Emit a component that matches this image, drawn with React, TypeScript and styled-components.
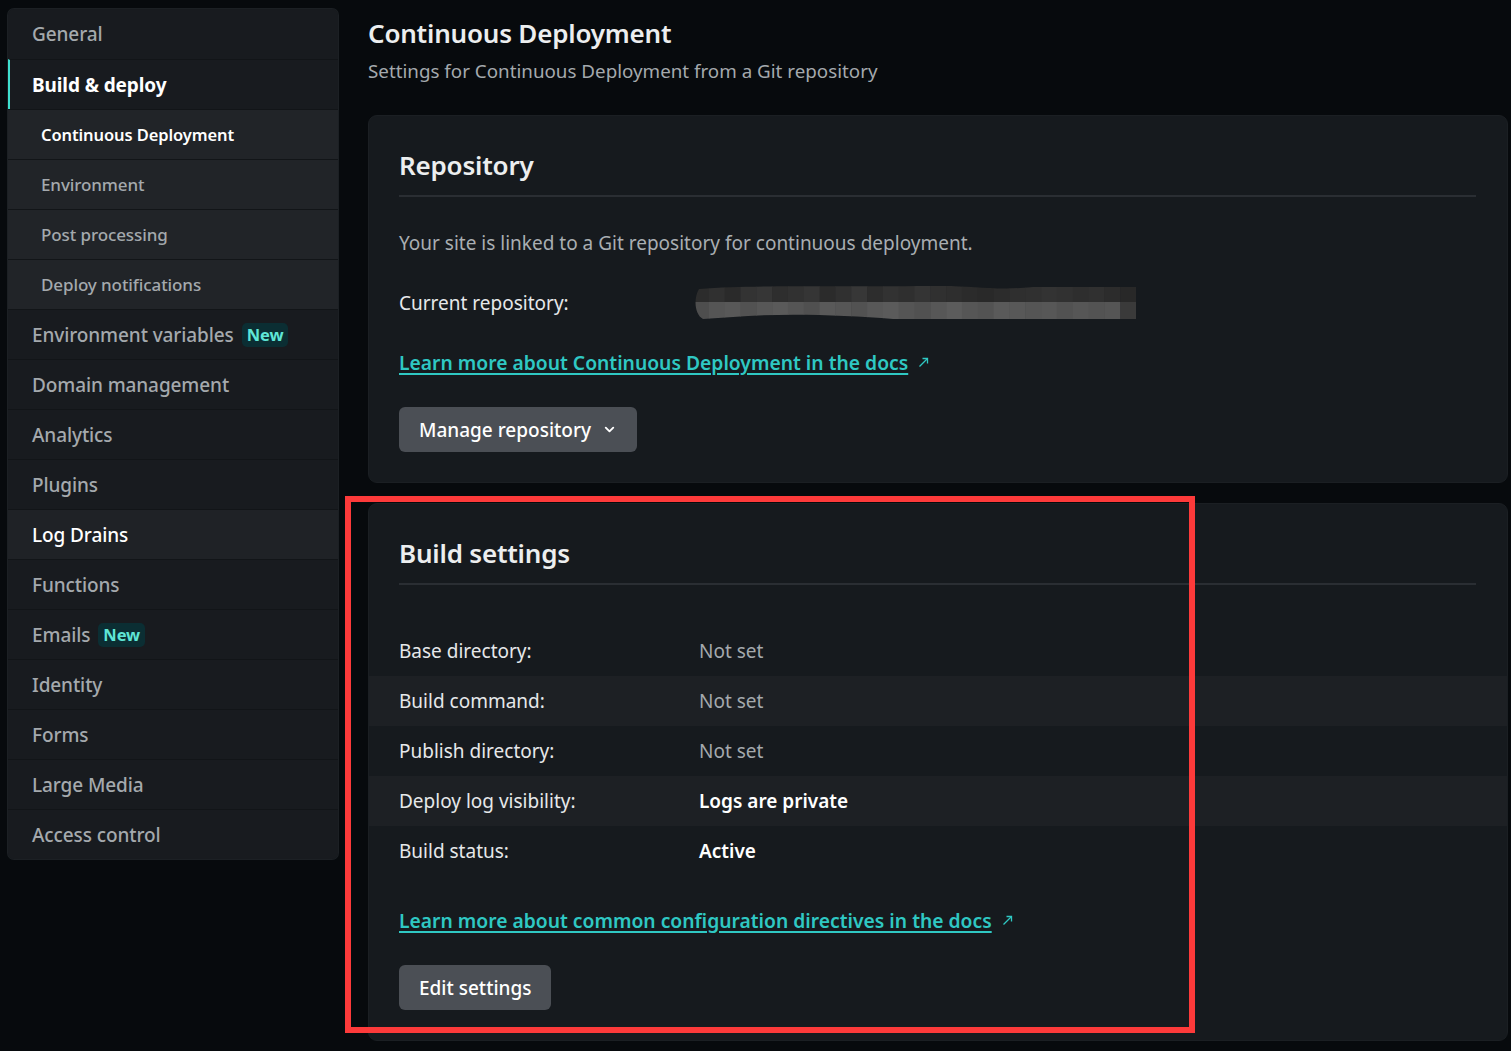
import React from "react";
import styled, { createGlobalStyle } from "styled-components";
import { ChevronDown } from "lucide-react";

const Global = createGlobalStyle`
  html, body { margin: 0; padding: 0; background: #070a0d; }
  body { font-family: "Noto Sans", "Open Sans", sans-serif; color: #e6e8ea; }
  * { box-sizing: border-box; }
`;

const Page = styled.div`
  display: grid;
  grid-template-columns: 330px 1fr;
  column-gap: 30px;
  align-items: start;
  padding: 9px 3px 12px 8px;
  min-height: 1051px;
  position: relative;
`;

const Sidebar = styled.nav`
  background: #181b1f;
  border-radius: 6px;
  overflow: hidden;
  display: flex;
  flex-direction: column;
  box-shadow: 0 0 0 1px #1c2024;
`;

const NavItem = styled.div<{ $active?: boolean; $sub?: boolean; $hover?: boolean }>`
  height: 50px;
  display: flex;
  align-items: center;
  gap: 8px;
  padding-left: ${(p) => (p.$sub ? "33px" : p.$active ? "22px" : "24px")};
  border-left: ${(p) => (p.$active ? "2px solid #3fe0d0" : "none")};
  border-top: 1px solid #121518;
  font-size: ${(p) => (p.$sub ? "17px" : "19px")};
  font-weight: ${(p) => (p.$active ? 700 : 500)};
  color: ${(p) => (p.$active || p.$hover ? "#ffffff" : "#a4a9ad")};
  background: ${(p) => (p.$sub ? "#212428" : p.$hover ? "#1f2226" : "#181b1f")};
  letter-spacing: -0.1px;
  &:first-child { border-top: none; }
`;

const SubActive = styled(NavItem)`
  color: #ffffff;
  font-weight: 600;
  font-size: 16.5px;
`;

const Badge = styled.span`
  background: #0b2e33;
  color: #5fe6d6;
  font-weight: 700;
  font-size: 16.5px;
  border-radius: 5px;
  padding: 0 5px;
  line-height: 24px;
`;

const Main = styled.main`
  display: flex;
  flex-direction: column;
`;

const Title = styled.h1`
  margin: 8px 0 0;
  font-size: 26px;
  line-height: 32px;
  font-weight: 600;
  color: #eceeef;
  letter-spacing: -0.2px;
`;

const Subtitle = styled.p`
  margin: 9px 0 0;
  font-size: 18.8px;
  line-height: 26px;
  color: #a4a9ad;
`;

const Card = styled.section<{ $top: number }>`
  margin-top: ${(p) => p.$top}px;
  background: #161a1e;
  border: 1px solid #1b1f23;
  border-radius: 9px;
  display: flex;
  flex-direction: column;
  padding: 32px 0 30px;
`;

const CardHead = styled.div`
  margin: 0 31px 0 30px;
  padding-bottom: 13px;
  border-bottom: 2px solid #2a2e33;
`;

const CardTitle = styled.h2`
  margin: 0;
  font-size: 26px;
  line-height: 34px;
  font-weight: 600;
  color: #eceeef;
  letter-spacing: -0.2px;
`;

const Block = styled.div<{ $top: number }>`
  margin: ${(p) => p.$top}px 31px 0 30px;
  height: 26px;
  display: flex;
  align-items: center;
  font-size: 19px;
  line-height: 26px;
  color: #c8ccd0;
`;

const ButtonBlock = styled.div<{ $top: number }>`
  margin: ${(p) => p.$top}px 31px 0 30px;
  display: flex;
`;

const Text = styled.span`
  color: #a9aeb2;
`;

const Label = styled.span`
  width: 300px;
  flex-shrink: 0;
  color: #e6e8ea;
`;

const Link = styled.a`
  color: #2fc8c3;
  font-weight: 600;
  font-size: 19.3px;
  text-decoration: underline;
  text-decoration-thickness: 2px;
  text-underline-offset: 3px;
  display: inline-flex;
  align-items: center;
`;

const Ext = styled.svg`
  margin-left: 10px;
  margin-top: -2px;
`;

const Button = styled.button`
  height: 45px;
  padding: 0 20px;
  border: none;
  border-radius: 6px;
  background: #4b4f55;
  color: #ffffff;
  font-family: inherit;
  font-size: 19px;
  font-weight: 500;
  display: inline-flex;
  align-items: center;
  gap: 11px;
`;

const Rows = styled.div`
  margin-top: 41px;
  display: flex;
  flex-direction: column;
`;

const Row = styled.div<{ $striped?: boolean }>`
  height: 50px;
  display: flex;
  align-items: center;
  padding-left: 30px;
  font-size: 19px;
  background: ${(p) => (p.$striped ? "#1d2024" : "transparent")};
`;

const Value = styled.span<{ $strong?: boolean }>`
  color: ${(p) => (p.$strong ? "#ffffff" : "#a4a9ad")};
  font-weight: ${(p) => (p.$strong ? 600 : 400)};
`;

const Redact = styled.svg`
  margin: -6px 0 -4px -6px;
  flex-shrink: 0;
`;

const Annotation = styled.div`
  position: absolute;
  left: 345px;
  top: 496px;
  width: 850px;
  height: 537px;
  border: 6px solid #fd3a3a;
  pointer-events: none;
`;

const ExtIcon = () => (
  <Ext width="11" height="11" viewBox="0 0 11 11" fill="none" stroke="#2fc8c3" strokeWidth="1.3">
    <path d="M1.5 9.5 L9.5 1.5" />
    <path d="M4.5 1.5 H9.5 V6.5" />
  </Ext>
);

const Mosaic = () => {
  const cols = 28;
  const w = 443 / cols;
  const top = [0x2c, 0x30, 0x2a, 0x33, 0x36, 0x2e, 0x31, 0x35, 0x2b, 0x30, 0x37, 0x2d, 0x32, 0x2f, 0x34, 0x30, 0x2e, 0x2b, 0x29, 0x2c, 0x2f, 0x30, 0x33, 0x31, 0x2e, 0x30, 0x2c, 0x28];
  const bot = [0x4e, 0x55, 0x58, 0x52, 0x57, 0x5a, 0x55, 0x50, 0x59, 0x56, 0x52, 0x58, 0x5b, 0x55, 0x51, 0x57, 0x5c, 0x56, 0x53, 0x5a, 0x58, 0x55, 0x57, 0x52, 0x56, 0x53, 0x55, 0x3a];
  const hex = (n: number) => `#${n.toString(16).repeat(3)}`;
  return (
    <Redact width="443" height="34" viewBox="0 0 443 34">
      <defs>
        <clipPath id="rc">
          <path d="M6 4 C60 0 120 2 240 1 C280 0 300 6 340 2 L443 2 L443 34 L200 34 C150 30 90 28 40 32 L10 34 C2 30 0 14 6 4 Z" />
        </clipPath>
      </defs>
      <g clipPath="url(#rc)">
        {top.map((c, i) => (
          <rect key={"t" + i} x={i * w} y={0} width={w + 0.5} height={17} fill={hex(c)} />
        ))}
        {bot.map((c, i) => (
          <rect key={"b" + i} x={i * w} y={17} width={w + 0.5} height={17} fill={hex(c)} />
        ))}
      </g>
    </Redact>
  );
};

export default function App() {
  return (
    <>
      <Global />
      <Page>
        <Sidebar>
          <NavItem>General</NavItem>
          <NavItem $active>Build &amp; deploy</NavItem>
          <SubActive $sub>Continuous Deployment</SubActive>
          <NavItem $sub>Environment</NavItem>
          <NavItem $sub>Post processing</NavItem>
          <NavItem $sub>Deploy notifications</NavItem>
          <NavItem>
            Environment variables <Badge>New</Badge>
          </NavItem>
          <NavItem>Domain management</NavItem>
          <NavItem>Analytics</NavItem>
          <NavItem>Plugins</NavItem>
          <NavItem $hover>Log Drains</NavItem>
          <NavItem>Functions</NavItem>
          <NavItem>
            Emails <Badge>New</Badge>
          </NavItem>
          <NavItem>Identity</NavItem>
          <NavItem>Forms</NavItem>
          <NavItem>Large Media</NavItem>
          <NavItem>Access control</NavItem>
        </Sidebar>

        <Main>
          <Title>Continuous Deployment</Title>
          <Subtitle>Settings for Continuous Deployment from a Git repository</Subtitle>

          <Card $top={31}>
            <CardHead>
              <CardTitle>Repository</CardTitle>
            </CardHead>
            <Block $top={33}>
              <Text>Your site is linked to a Git repository for continuous deployment.</Text>
            </Block>
            <Block $top={34}>
              <Label>Current repository:</Label>
              <Mosaic />
            </Block>
            <Block $top={34}>
              <Link>Learn more about Continuous Deployment in the docs</Link>
              <ExtIcon />
            </Block>
            <ButtonBlock $top={31}>
              <Button>
                Manage repository
                <ChevronDown size={15} strokeWidth={3} />
              </Button>
            </ButtonBlock>
          </Card>

          <Card $top={20}>
            <CardHead>
              <CardTitle>Build settings</CardTitle>
            </CardHead>
            <Rows>
              <Row>
                <Label>Base directory:</Label>
                <Value>Not set</Value>
              </Row>
              <Row $striped>
                <Label>Build command:</Label>
                <Value>Not set</Value>
              </Row>
              <Row>
                <Label>Publish directory:</Label>
                <Value>Not set</Value>
              </Row>
              <Row $striped>
                <Label>Deploy log visibility:</Label>
                <Value $strong>Logs are private</Value>
              </Row>
              <Row>
                <Label>Build status:</Label>
                <Value $strong>Active</Value>
              </Row>
            </Rows>
            <Block $top={32}>
              <Link>Learn more about common configuration directives in the docs</Link>
              <ExtIcon />
            </Block>
            <ButtonBlock $top={31}>
              <Button>Edit settings</Button>
            </ButtonBlock>
          </Card>
        </Main>
        <Annotation />
      </Page>
    </>
  );
}
